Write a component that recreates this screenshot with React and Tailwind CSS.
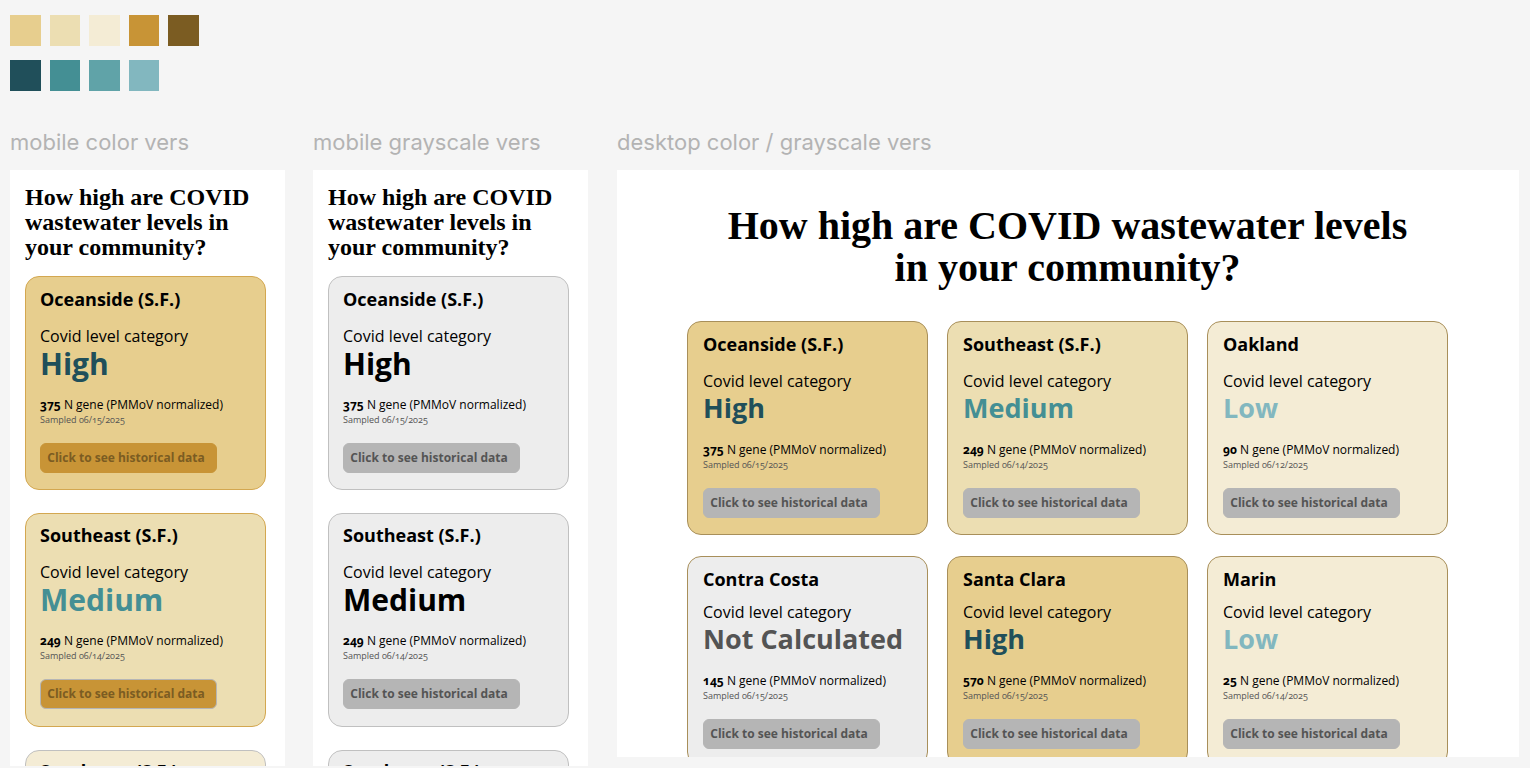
import clsx from "clsx";

const swatches = [
  "bg-[#e7ce8e]",
  "bg-[#ecdeb2]",
  "bg-[#f4ecd5]",
  "bg-[#c89436]",
  "bg-[#7b5c22]",
  "bg-[#204f5a]",
  "bg-[#448f94]",
  "bg-[#60a3a8]",
  "bg-[#82b7bf]",
];

const cardTones = {
  high: "bg-[#e7ce8e]",
  medium: "bg-[#ecdeb2]",
  low: "bg-[#f4ecd5]",
  none: "bg-[#ededed]",
};

const levelTones = {
  High: "text-[#204f5a]",
  Medium: "text-[#448f94]",
  Low: "text-[#82b7bf]",
  "Not Calculated": "text-[#545454]",
};

const sites = [
  { name: "Oceanside (S.F.)", level: "High", tone: "high", count: 375, date: "06/15/2025" },
  { name: "Southeast (S.F.)", level: "Medium", tone: "medium", count: 249, date: "06/14/2025" },
  { name: "Oakland", level: "Low", tone: "low", count: 90, date: "06/12/2025" },
  { name: "Contra Costa", level: "Not Calculated", tone: "none", count: 145, date: "06/15/2025" },
  { name: "Santa Clara", level: "High", tone: "high", count: 570, date: "06/15/2025" },
  { name: "Marin", level: "Low", tone: "low", count: 25, date: "06/14/2025" },
];

const grayButton = "bg-[#b5b5b5] border-[#b5b5b5] text-[#545454]";
const goldButton = "bg-[#c89436] border-[#c89436] text-[#7b5c22]";
const outlinedGoldButton = "bg-[#c89436] border-[#b5b5b5] text-[#7b5c22]";

const mobileCards = [
  { site: sites[0], padding: "px-[14px] pt-[10px] pb-4", border: "border-[#d3a750]", button: goldButton },
  { site: sites[1], padding: "px-[14px] pt-[9px] pb-[17px]", border: "border-[#d3a750]", button: outlinedGoldButton },
  {
    site: { ...sites[1], level: "Low", tone: "low" },
    padding: "px-[14px] pt-2 pb-[18px]",
    border: "border-[#c0c0c0]",
    button: goldButton,
  },
];

function Card({ site, large, gray, tight, padding, border, button }) {
  return (
    <article
      className={clsx(
        "flex flex-col items-start rounded-[14px] border text-black",
        gray ? cardTones.none : cardTones[site.tone],
        padding,
        border,
      )}
    >
      <h3 className="text-[18px] leading-6 font-bold">{site.name}</h3>
      <p className={clsx("text-[16px] leading-5 font-medium", tight ? "mt-[11px]" : "mt-[15px]")}>
        Covid level category
      </p>
      <p
        className={clsx(
          "font-bold whitespace-nowrap",
          large ? "text-[30px] leading-9" : "mb-[2px] text-[27px] leading-[34px]",
          gray ? "text-black" : levelTones[site.level],
        )}
      >
        {site.level}
      </p>
      <p className="mt-[15px] text-[12px] leading-4 whitespace-nowrap">
        <strong className="font-bold">{site.count}</strong> N gene (PMMoV normalized)
      </p>
      <p className="mt-px text-[9px] leading-3 text-[#545454]">Sampled {site.date}</p>
      <button
        type="button"
        className={clsx(
          "mt-[17px] h-[30px] w-[177px] rounded-md border pr-[5px] text-[12px] leading-4 font-bold whitespace-nowrap",
          button,
        )}
      >
        Click to see historical data
      </button>
    </article>
  );
}

function Board({ label, className, children }) {
  return (
    <section className={clsx("flex min-h-0 flex-col", className)}>
      <h2 className="mb-[14px] font-['Inter',sans-serif] text-[22px] leading-7 whitespace-nowrap text-[#b3b3b3]">
        {label}
      </h2>
      {children}
    </section>
  );
}

function MobileBoard({ label, gray }) {
  return (
    <Board label={label} className="w-[275px] shrink-0">
      <div className="min-h-0 flex-1 overflow-hidden bg-white pt-[15px] pr-[19px] pl-[15px]">
        <h1 className="mb-4 font-['Liberation_Serif',serif] text-[24px] leading-[25px] font-bold text-black">
          How high are COVID wastewater levels in your community?
        </h1>
        <div className="flex flex-col gap-[23px]">
          {mobileCards.map((card, i) => (
            <Card
              key={i}
              site={card.site}
              large
              gray={gray}
              padding={card.padding}
              border={gray ? "border-[#c0c0c0]" : card.border}
              button={gray ? grayButton : card.button}
            />
          ))}
        </div>
      </div>
    </Board>
  );
}

export default function App() {
  return (
    <main className="flex h-screen flex-col overflow-hidden bg-[#f5f5f5] pt-[15px] pr-[11px] pb-[2px] pl-[10px] font-['Open_Sans',sans-serif] oldstyle-nums">
      <div className="mb-[37px] grid w-[189px] shrink-0 grid-cols-5 gap-x-[9px] gap-y-[14px]">
        {swatches.map((color) => (
          <div key={color} className={clsx("h-[31px]", color)} />
        ))}
      </div>
      <div className="flex min-h-0 flex-1 gap-7">
        <MobileBoard label="mobile color vers" />
        <MobileBoard label="mobile grayscale vers" gray />
        <Board label="desktop color / grayscale vers" className="mb-[9px] ml-px min-w-0 flex-1">
          <div className="min-h-0 flex-1 overflow-hidden bg-white pt-[35px] pr-[71px] pl-[70px]">
            <h1 className="mx-auto mb-8 max-w-[700px] text-center font-['Liberation_Serif',serif] text-[40px] leading-[42px] font-bold text-black">
              How high are COVID wastewater levels in your community?
            </h1>
            <div className="grid grid-cols-3 gap-x-[19px] gap-y-[21px]">
              {sites.map((site, i) => (
                <Card
                  key={site.name}
                  site={site}
                  tight={i > 2}
                  padding="px-[15px] pt-[10px] pb-4"
                  border="border-[#a88f5a]"
                  button={grayButton}
                />
              ))}
            </div>
          </div>
        </Board>
      </div>
    </main>
  );
}
